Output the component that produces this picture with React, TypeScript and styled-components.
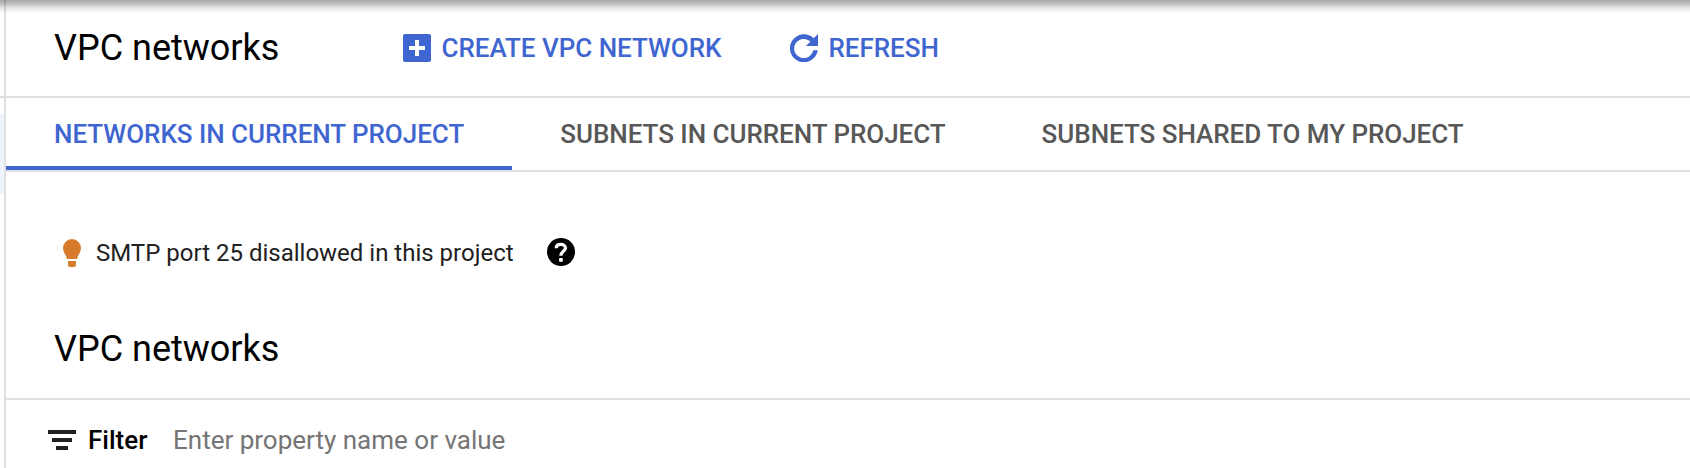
import React from "react";
import styled, { createGlobalStyle } from "styled-components";

const BLUE = "#3f66d0";
const LINE = "#e0e0e0";

const GlobalStyle = createGlobalStyle`
  * { box-sizing: border-box; }
  body {
    margin: 0;
    overflow: hidden;
    background: #fff;
    font-family: Roboto, "Liberation Sans", sans-serif;
  }
`;

const Page = styled.div`
  position: relative;
  display: flex;
  height: 468px;
`;

const TopShadow = styled.div`
  position: absolute;
  inset: 0 0 auto 0;
  height: 14px;
  background: linear-gradient(to bottom, rgba(0, 0, 0, 0.34), rgba(0, 0, 0, 0.26) 25%, rgba(0, 0, 0, 0.1) 57%, rgba(0, 0, 0, 0.02) 86%, transparent);
`;

const NavEdge = styled.aside`
  flex: none;
  width: 4px;
  display: flex;
  flex-direction: column;
`;

const NavHeader = styled.div`
  height: 98px;
  border-bottom: 2px solid ${LINE};
`;

const NavSelected = styled.div`
  height: 80px;
  margin-top: 16px;
  background: #eef3fd;
`;

const Main = styled.main`
  flex: 1;
  min-width: 0;
  border-left: 2px solid ${LINE};
`;

const Header = styled.header`
  display: flex;
  align-items: center;
  height: 98px;
  padding-left: 48px;
  border-bottom: 2px solid ${LINE};
`;

const Title = styled.h1`
  margin: 0;
  width: 349px;
  font-size: 36px;
  font-weight: 400;
  line-height: 42px;
  color: #000;
  white-space: nowrap;
`;

const Action = styled.button<{ $width: number }>`
  display: flex;
  align-items: center;
  gap: 10.5px;
  width: ${(p) => p.$width}px;
  padding: 0;
  border: 0;
  background: none;
  color: ${BLUE};
  font: 500 26px/30px Roboto, sans-serif;
  letter-spacing: -0.03px;
  white-space: nowrap;
`;

const Icon = styled.svg`
  flex: none;
  display: block;
  fill: currentColor;
`;

const Tabs = styled.nav`
  display: flex;
  height: 74px;
  border-bottom: 2px solid ${LINE};
`;

const Tab = styled.div<{ $active?: boolean }>`
  padding: 21px 48px 0;
  border-bottom: 4px solid ${(p) => (p.$active ? BLUE : "transparent")};
  color: ${(p) => (p.$active ? BLUE : "#575757")};
  font-size: 26px;
  font-weight: 500;
  line-height: 30px;
  letter-spacing: -0.035px;
  white-space: nowrap;
`;

const Notice = styled.div`
  display: flex;
  align-items: flex-start;
  height: 29px;
  margin: 66px 0 0 57px;
  font-size: 24px;
  line-height: 30px;
  color: #212121;
  white-space: nowrap;
`;

const BulbIcon = styled(Icon)`
  margin-top: 1px;
`;

const NoticeText = styled.span`
  width: 451px;
  margin-left: 15px;
`;

const Section = styled.section`
  height: 133px;
  padding: 61px 0 0 48px;
  border-bottom: 2px solid ${LINE};
`;

const FilterBar = styled.div`
  display: flex;
  align-items: center;
  height: 80px;
  padding-left: 42px;
  color: #212121;
`;

const FilterLabel = styled.label`
  width: 85px;
  margin-left: 12px;
  color: #000;
  font-size: 26px;
  font-weight: 500;
`;

const FilterInput = styled.input`
  width: 600px;
  padding: 0;
  border: 0;
  outline: 0;
  background: none;
  font: 400 26px/30px Roboto, sans-serif;
  color: #212121;
  &::placeholder { color: #757575; }
`;

export default function App() {
  return (
    <Page>
      <GlobalStyle />
      <NavEdge>
        <NavHeader />
        <NavSelected />
      </NavEdge>
      <Main>
        <Header>
          <Title>VPC networks</Title>
          <Action $width={387}>
            <Icon width="28" height="28" viewBox="0 0 28 28">
              <rect width="28" height="28" rx="2" />
              <path d="M12 6h4v6h6v4h-6v6h-4v-6H6v-4h6z" fill="#fff" />
            </Icon>
            CREATE VPC NETWORK
          </Action>
          <Action $width={160}>
            <Icon width="28" height="28" viewBox="0 0 28 28">
              <path d="M28 0v12H16l4.400-4.400A9.600 9.600 0 1 0 23.200 16.200h4.600A14 14 0 1 1 23.700 4.200z" />
            </Icon>
            REFRESH
          </Action>
        </Header>
        <Tabs>
          <Tab $active>NETWORKS IN CURRENT PROJECT</Tab>
          <Tab>SUBNETS IN CURRENT PROJECT</Tab>
          <Tab>SUBNETS SHARED TO MY PROJECT</Tab>
        </Tabs>
        <Notice>
          <BulbIcon width="18" height="28" viewBox="0 0 18 28" color="#d67b2c">
            <path d="M9 0a9 9 0 0 0-9 9c0 4 2.800 6.500 4 11h10c1.200-4.500 4-7 4-11a9 9 0 0 0-9-9zM5 22h8v4a2 2 0 0 1-2 2H7a2 2 0 0 1-2-2z" />
          </BulbIcon>
          <NoticeText>SMTP port 25 disallowed in this project</NoticeText>
          <Icon width="28" height="28" viewBox="0 0 28 28" color="#000">
            <circle cx="14" cy="14" r="14" />
            <path d="M9.200 10.200C9.200 7.800 11 6.400 13.800 6.400S18.500 7.900 18.500 10.100C18.500 13.300 13.900 13.400 13.900 17.700" fill="none" stroke="#fff" strokeWidth="3.200" />
            <rect x="12.100" y="20" width="3.700" height="3.700" rx="0.800" fill="#fff" />
          </Icon>
        </Notice>
        <Section>
          <Title as="h2">VPC networks</Title>
        </Section>
        <FilterBar>
          <Icon width="28" height="20" viewBox="0 0 28 20">
            <path d="M0 0h28v4H0zM4 8h20v4H4zM8 16h12v4H8z" />
          </Icon>
          <FilterLabel htmlFor="filter">Filter</FilterLabel>
          <FilterInput id="filter" placeholder="Enter property name or value" />
        </FilterBar>
      </Main>
      <TopShadow />
    </Page>
  );
}
